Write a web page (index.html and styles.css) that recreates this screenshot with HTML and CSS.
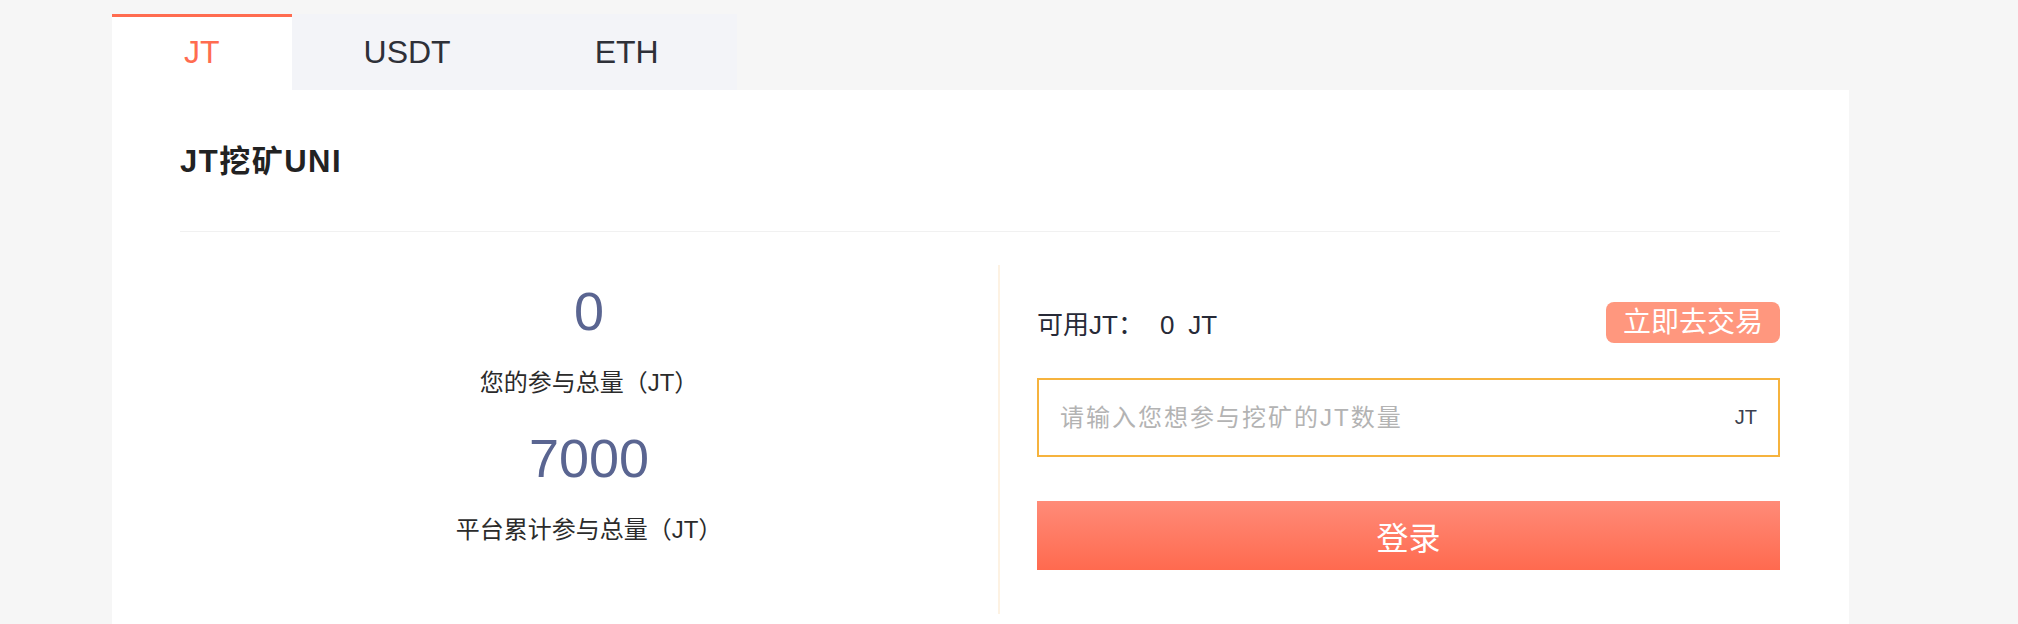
FILE: index.html
```html
<!DOCTYPE html>
<html lang="zh-CN">
<head>
<meta charset="utf-8">
<title>JT挖矿UNI</title>
<link rel="stylesheet" href="styles.css">
</head>
<body>
<div class="page">
  <div class="tabs">
    <div class="tab active">JT</div>
    <div class="tab">USDT</div>
    <div class="tab">ETH</div>
  </div>
  <div class="card">
    <div class="title">JT挖矿UNI</div>
    <div class="content">
      <div class="stats">
        <div class="stat-num">0</div>
        <div class="stat-label">您的参与总量（JT）</div>
        <div class="stat-num second">7000</div>
        <div class="stat-label">平台累计参与总量（JT）</div>
      </div>
      <div class="mining">
        <div class="avail-row">
          <div class="avail">可用JT：<span class="avail-num">0</span>JT</div>
          <div class="trade-btn">立即去交易</div>
        </div>
        <div class="amount">
          <input type="text" placeholder="请输入您想参与挖矿的JT数量">
          <span class="unit">JT</span>
        </div>
        <button class="login">登录</button>
      </div>
    </div>
  </div>
</div>
</body>
</html>
```

FILE: styles.css
```css
html, body {
  margin: 0;
  background: #f6f6f6;
  font-family: "Liberation Sans", "Noto Sans CJK SC", sans-serif;
}

.page {
  margin-left: 112px;
  width: 1737px;
  padding-top: 14px;
}

.tabs {
  display: inline-flex;
  background: #f3f4f8;
  padding-right: 6px;
}

.tab {
  padding: 0 72px;
  height: 73px;
  line-height: 71px;
  font-size: 32px;
  color: #2e3038;
  border-top: 3px solid transparent;
}

.tab.active {
  background: #fff;
  color: #ff6c50;
  border-top-color: #ff6c50;
}

.card {
  background: #fff;
  padding: 0 69px 40px 68px;
}

.title {
  font-size: 31px;
  font-weight: bold;
  line-height: 40px;
  letter-spacing: 1.5px;
  color: #222;
  padding: 52px 0 49px;
  border-bottom: 1px solid #f1f1f1;
}

.content {
  display: flex;
  margin-top: 33px;
}

.stats {
  flex: 0 0 818px;
  display: flex;
  flex-direction: column;
  align-items: center;
  padding-top: 16px;
}

.stat-num {
  font-size: 54px;
  line-height: 60px;
  color: #5a6591;
}

.stat-num.second {
  margin-top: 28px;
}

.stat-label {
  font-size: 24px;
  line-height: 34px;
  color: #2b2b2b;
  margin-top: 25px;
}

.mining {
  flex: 1;
  border-left: 2px solid #fdf2e3;
  padding: 37px 0 44px 37px;
}

.avail-row {
  display: flex;
  justify-content: space-between;
  align-items: center;
}

.avail {
  font-size: 26px;
  color: #272a37;
}

.avail-num {
  margin: 0 14px 0 16px;
}

.trade-btn {
  background: #ff977e;
  color: #fff;
  font-size: 28px;
  line-height: 41px;
  padding: 0 17px;
  border-radius: 8px;
}

.amount {
  margin-top: 35px;
  height: 79px;
  box-sizing: border-box;
  border: 2px solid #f6b33d;
  display: flex;
  align-items: center;
  padding: 0 21px;
}

.amount input {
  flex: 1;
  border: none;
  outline: none;
  padding: 0;
  background: transparent;
  font-family: inherit;
  font-size: 24px;
  letter-spacing: 2px;
  color: #333;
}

.amount input::placeholder {
  color: #b3b3b3;
}

.unit {
  font-size: 20px;
  color: #3c3f4e;
}

.login {
  display: block;
  margin-top: 44px;
  width: 100%;
  height: 69px;
  border: none;
  padding: 0;
  background: linear-gradient(#ff8b78, #ff6a4f);
  color: #fff;
  font-family: inherit;
  font-size: 32px;
}
```
